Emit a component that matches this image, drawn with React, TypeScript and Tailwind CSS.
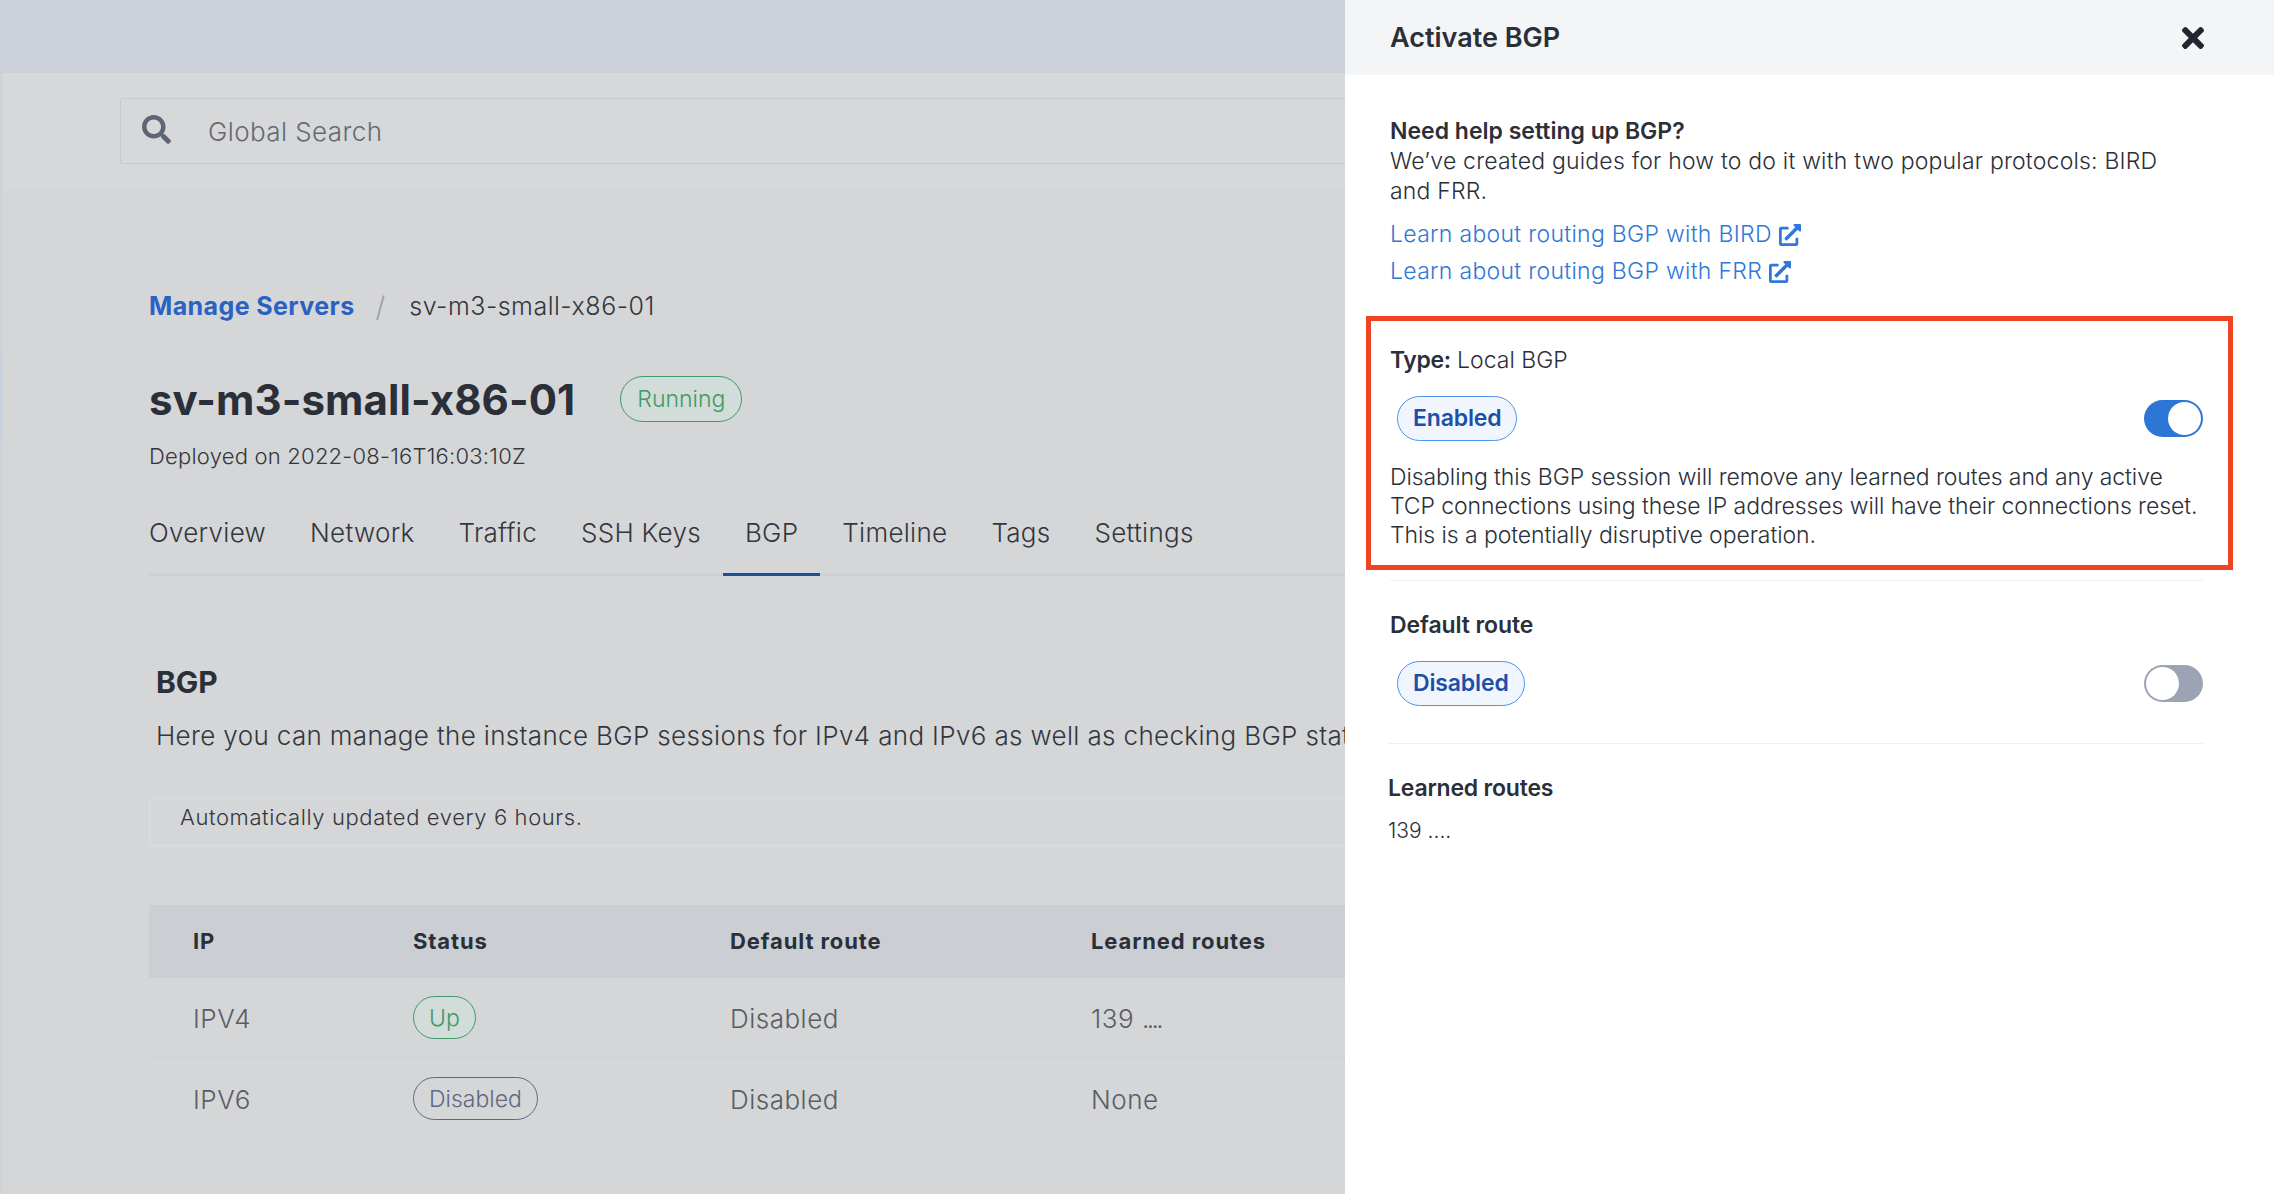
import React from 'react';
import { FaExternalLinkAlt, FaSearch, FaTimes } from 'react-icons/fa';

const tabs = ['Overview', 'Network', 'Traffic', 'SSH Keys', 'BGP', 'Timeline', 'Tags', 'Settings'];

const Toggle = ({ on }: { on: boolean }) => (
  <div
    className={
      on
        ? 'flex h-[37px] w-[59px] items-center justify-end rounded-full bg-[#2e76d6] px-[2px]'
        : 'flex h-[37px] w-[59px] items-center justify-start rounded-full bg-[#9ca3b5] px-[2px]'
    }
  >
    <div className="h-[33px] w-[33px] rounded-full bg-white" />
  </div>
);

const PanelBadge = ({ label }: { label: string }) => (
  <div className="ml-[7px] flex h-[45px] items-center rounded-full border border-[#4f92ee] bg-[#f1f6fe] px-[15px] text-[23px] font-semibold tracking-[-0.15px] text-[#1c50a8]">
    {label}
  </div>
);

const ExtLink = ({ label }: { label: string }) => (
  <a className="flex h-[37px] items-center gap-[7px] text-[23px] font-light tracking-[0.3px] text-[#2f77d8]">
    {label}
    <FaExternalLinkAlt className="h-[22px] w-[22px]" />
  </a>
);

export default function App() {
  return (
    <div className="flex h-[1194px] w-[2274px] overflow-hidden bg-[#d5d6d8] font-['Inter',sans-serif] text-[#2b2f38]">
      {/* page under the drawer */}
      <div className="relative min-w-0 flex-1 overflow-hidden">
        <div className="h-[73px] bg-[#cbd0d9]" />
        <div className="absolute left-0 top-[73px] h-[1121px] w-[3px] bg-[#d0d2d5]" />
        <div className="absolute left-0 top-[356px] h-[81px] w-[3px] bg-[#c9d1de]" />

        <div className="h-[116px] bg-[#d7d8da] pl-[120px] pt-[25px]">
          <div className="flex h-[66px] items-center rounded-l-[3px] border border-r-0 border-[#c6c9cf] pl-[21px]">
            <FaSearch className="-mt-[3px] h-[29px] w-[29px] text-[#5e6675]" />
            <span className="ml-[37px] text-[26px] font-light tracking-[0.4px] text-[#656a72]">Global Search</span>
          </div>
        </div>

        <div className="pl-[149px]">
          <div className="mt-[101px] flex h-[34px] items-center text-[25px]">
            <span className="font-bold tracking-[0.4px] text-[#2a62c4]">Manage Servers</span>
            <span className="ml-[21px] text-[28px] font-light text-[#9a9ea6]">/</span>
            <span className="ml-[24px] font-light tracking-[0.5px] text-[#33363d]">sv-m3-small-x86-01</span>
          </div>

          <div className="mt-[45px] flex h-[60px] items-center">
            <h1 className="text-[42px] font-bold tracking-[0.1px] text-[#2b2f38]">sv-m3-small-x86-01</h1>
            <div className="ml-[45px] flex h-[46px] items-center rounded-full border border-[#3f9a68] bg-[#d2dcd8] px-[16px] text-[23px] font-light text-[#3f9a68]">
              Running
            </div>
          </div>

          <div className="mt-[12px] h-[30px] text-[22px] font-light leading-[30px] tracking-[0.22px] text-[#33363d]">
            Deployed on 2022-08-16T16:03:10Z
          </div>

          <div className="mt-[19px] flex h-[86px] border-b-[3px] border-[#cfd1d4]">
            <div className="-ml-[22px] flex">
              {tabs.map((t) => (
                <div
                  key={t}
                  className={
                    t === 'BGP'
                      ? '-mb-[3px] flex items-center border-b-[3px] border-[#1d4e96] px-[22px] pt-[2px] text-[26px] font-light tracking-[0.28px] text-[#33363d]'
                      : 'flex items-center px-[22px] pt-[2px] text-[26px] font-light tracking-[0.28px] text-[#33363d]'
                  }
                >
                  {t}
                </div>
              ))}
            </div>
          </div>

          <h2 className="ml-[7px] mt-[86px] h-[40px] text-[30px] font-bold leading-[40px]">BGP</h2>
          <p className="ml-[7px] mt-[16px] h-[36px] whitespace-nowrap text-[26px] font-light leading-[36px] tracking-[0.35px] text-[#33363d]">
            Here you can manage the instance BGP sessions for IPv4 and IPv6 as well as checking BGP status and routes.
          </p>

          <div className="mt-[44px] flex h-[48px] items-center border border-r-0 border-[#dcdde0] pb-[9px] pl-[30px] text-[22px] font-light tracking-[0.6px] text-[#33363d]">
            Automatically updated every 6 hours.
          </div>

          <div className="mt-[59px] text-[26px] font-light tracking-[0.5px] text-[#5a5d63]">
            <div className="grid h-[73px] grid-cols-[220px_317px_361px_1fr] items-center bg-[#cbced2] pl-[44px] text-[22px] font-bold tracking-[0.9px] text-[#2b2f38]">
              <span>IP</span>
              <span>Status</span>
              <span>Default route</span>
              <span>Learned routes</span>
            </div>
            <div className="grid h-[80px] grid-cols-[220px_317px_361px_1fr] items-center border-b border-[#cdcfd2] pl-[44px]">
              <span className="pt-[2px]">IPV4</span>
              <div>
                <span className="inline-flex h-[43px] items-center rounded-full border border-[#3f9a68] bg-[#d2dcd8] px-[15px] pt-[2px] text-[23px] tracking-normal text-[#3f9a68]">Up</span>
              </div>
              <span className="pt-[2px]">Disabled</span>
              <span className="pt-[2px]">
                139 <span className="tracking-[-2.6px]">....</span>
              </span>
            </div>
            <div className="grid h-[81px] grid-cols-[220px_317px_361px_1fr] items-center pl-[44px]">
              <span className="pt-[2px]">IPV6</span>
              <div>
                <span className="inline-flex h-[43px] items-center rounded-full border border-[#5f6880] px-[15px] pt-[2px] text-[23px] tracking-normal text-[#5f6880]">Disabled</span>
              </div>
              <span className="pt-[2px]">Disabled</span>
              <span className="pt-[2px]">None</span>
            </div>
          </div>
        </div>
      </div>

      {/* drawer */}
      <div className="flex w-[929px] flex-none flex-col bg-white text-[#2b2f38]">
        <div className="flex h-[75px] flex-none items-center justify-between bg-[#f4f5f7] pl-[45px] pr-[69px]">
          <span className="pt-[2px] text-[27px] font-semibold">Activate BGP</span>
          <FaTimes className="h-[32px] w-[24px] text-[#22262e]" />
        </div>

        <div className="pl-[45px] pr-[71px] pt-[42px]">
          <div className="text-[23px] font-semibold leading-[29px]">Need help setting up BGP?</div>
          <p className="w-[790px] text-[23px] font-light leading-[30px] tracking-[0.2px]">
            We’ve created guides for how to do it with two popular protocols: BIRD and FRR.
          </p>
          <div className="mt-[10px]">
            <ExtLink label="Learn about routing BGP with BIRD" />
            <ExtLink label="Learn about routing BGP with FRR" />
          </div>
        </div>

        <div className="ml-[21px] mr-[41px] mt-[26px] h-[254px] flex-none border-[5px] border-[#ef4423] pl-[19px] pr-[25px] pt-[24px]">
          <div className="h-[30px] text-[23px] font-light leading-[30px]">
            <span className="font-semibold tracking-[-0.4px]">Type:</span> Local BGP
          </div>
          <div className="mt-[21px] flex h-[45px] items-center justify-between">
            <PanelBadge label="Enabled" />
            <Toggle on />
          </div>
          <p className="mt-[22px] whitespace-nowrap text-[23px] font-light leading-[29px] tracking-[-0.08px]">
            Disabling this BGP session will remove any learned routes and any active
            <br />
            TCP connections using these IP addresses will have their connections reset.
            <br />
            This is a potentially disruptive operation.
          </p>
        </div>

        <div className="ml-[45px] mr-[71px] mt-[10px] border-t border-[#eef0f2] pt-[29px]">
          <div className="h-[30px] text-[23px] font-semibold leading-[30px] tracking-[-0.1px]">Default route</div>
          <div className="mt-[21px] flex h-[45px] items-center justify-between">
            <PanelBadge label="Disabled" />
            <Toggle on={false} />
          </div>
        </div>

        <div className="ml-[43px] mr-[71px] mt-[37px] border-t border-[#eef0f2] pt-[29px]">
          <div className="h-[30px] text-[23px] font-semibold leading-[30px] tracking-[-0.2px]">Learned routes</div>
          <div className="mt-[13px] h-[30px] text-[21px] font-light leading-[30px]">139 ....</div>
        </div>
      </div>
    </div>
  );
}
